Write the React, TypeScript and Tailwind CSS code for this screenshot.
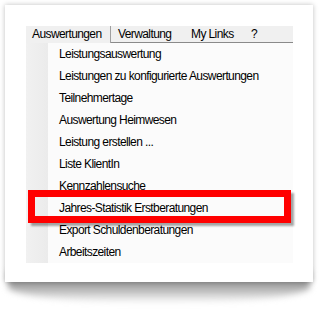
const items = [
    "Leistungsauswertung",
    "Leistungen zu konfigurierte Auswertungen",
    "Teilnehmertage",
    "Auswertung Heimwesen",
    "Leistung erstellen ...",
    "Liste KlientIn",
    "Kennzahlensuche",
    "Jahres-Statistik Erstberatungen",
    "Export Schuldenberatungen",
    "Arbeitszeiten",
]

export default function App() {
    return (
        <main className="w-[327px] h-[312px] bg-white pl-[5px] pt-[5px] font-['Liberation_Sans',Arial,sans-serif] text-[12px] tracking-[-0.6px] text-black">
            <div className="relative w-[308px] h-[277px]">
                {/* lifted paper shadow */}
                <div className="absolute left-[3px] right-[3px] top-[266px] h-[32px] rounded-b-[50%] bg-gradient-to-b from-[#7a7a7a] via-[#ababab] to-transparent blur-[3px]"></div>

                <div className="relative w-full h-full bg-white shadow-[0_0_5px_rgba(0,0,0,0.25)] pl-[21px] pt-[21px]">
                    <div className="w-[267px]">
                        {/* menu bar */}
                        <div className="flex h-[17px] bg-[#f0f0f0] leading-[16px]">
                            <div className="w-[85px] pl-[6px] border-r border-[#a0a0a0]">Auswertungen</div>
                            <div className="flex flex-1 pl-[7px] border-b border-[#8a8a8a]">
                                <span className="w-[73px]">Verwaltung</span>
                                <span className="w-[60px]">My Links</span>
                                <span>?</span>
                            </div>
                        </div>

                        {/* dropdown */}
                        <div className="relative flex bg-[#fbfbfb]">
                            <div className="w-[22px] bg-gradient-to-r from-[#f1f1f1] to-[#ebebeb]"></div>
                            <ul className="flex-1 pl-[11px]">
                                {items.map((item) => (
                                    <li key={item} className="h-[22px] leading-[22px] whitespace-nowrap">
                                        {item}
                                    </li>
                                ))}
                            </ul>

                            <div className="absolute left-[2px] top-[147px] w-[263px] h-[33px] border-[7px] border-[#ff0000] shadow-[3px_3px_2px_rgba(0,0,0,0.35)]"></div>
                        </div>
                    </div>
                </div>
            </div>
        </main>
    )
}
